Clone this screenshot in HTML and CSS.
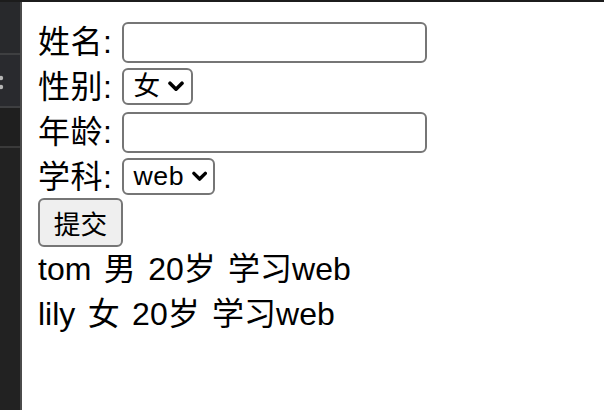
FILE: index.html
```
<!DOCTYPE html>
<html lang="zh">
<head>
<meta charset="utf-8">
<link rel="stylesheet" href="styles.css">
</head>
<body>
<div class="frame">
  <aside class="side">
    <div class="side-cell side-a"></div>
    <div class="side-cell side-b"><svg class="side-glyph" viewBox="0 0 6 18"><circle cx="1" cy="4" r="2.2" fill="#b5b5b5"/><circle cx="1" cy="13" r="2.2" fill="#b5b5b5"/></svg></div>
    <div class="side-cell side-c"></div>
    <div class="side-cell side-d"></div>
  </aside>
  <main class="page">
    <div class="row row-input"><span class="label">姓名:</span><span class="text-input"></span></div>
    <div class="row row-select"><span class="label">性别:</span><span class="select select-sex"><span class="select-val">女</span><svg class="chev" viewBox="0 0 16 11"><path d="M2 2.2 L8 8.2 L14 2.2" fill="none" stroke="#000" stroke-width="3.6" stroke-linecap="round" stroke-linejoin="round"/></svg></span></div>
    <div class="row row-input"><span class="label">年龄:</span><span class="text-input"></span></div>
    <div class="row row-select"><span class="label">学科:</span><span class="select select-sub"><span class="select-val latin">web</span><svg class="chev" viewBox="0 0 16 11"><path d="M2 2.2 L8 8.2 L14 2.2" fill="none" stroke="#000" stroke-width="3.6" stroke-linecap="round" stroke-linejoin="round"/></svg></span></div>
    <div class="btn-row"><span class="btn">提交</span></div>
    <div class="line">tom 男 20岁 学习web</div>
    <div class="line">lily 女 20岁 学习web</div>
  </main>
</div>
</body>
</html>
```
FILE: styles.css
```
* { box-sizing: border-box; }
html, body { margin: 0; padding: 0; }
body {
  width: 604px;
  height: 410px;
  overflow: hidden;
  background: #fff;
  font-family: "Liberation Sans", "Noto Sans CJK SC", sans-serif;
  color: #000;
}
.frame {
  display: flex;
  height: 410px;
  border-top: 2px solid #1c1c1c;
}
.side {
  width: 22px;
  flex: none;
  background: #27282b;
  border-right: 2px solid #4b4b4b;
  display: flex;
  flex-direction: column;
}
.side-cell { border-bottom: 2px solid #3e3f41; }
.side-a { height: 53px; background: #28292c; }
.side-b { height: 53px; background: #292a2e; position: relative; }
.side-c { height: 40px; background: #1f1f1f; border-bottom-color: #3a3a3a; }
.side-d { flex: 1; background: #222222; border-bottom: none; }
.side-glyph {
  position: absolute;
  left: 0;
  top: 19px;
  width: 6px;
  height: 18px;
}
.page {
  flex: 1;
  padding: 16px 16px 0 16px;
}
.row {
  height: 45px;
  display: flex;
  align-items: center;
  font-size: 32px;
}
.label { line-height: 45px; margin-right: 10px; padding-top: 3px; letter-spacing: 0.5px; }
.text-input {
  display: block;
  width: 305px;
  height: 41px;
  border: 2px solid #767676;
  border-radius: 6px;
  background: #fff;
  margin-top: 4px;
}
.select {
  display: flex;
  align-items: center;
  height: 37px;
  border: 2px solid #767676;
  border-radius: 6px;
  background: #fff;
  font-size: 26.7px;
  padding: 0 6px 0 9px;
  margin-top: 2px;
}
.select-val { line-height: 33px; margin-right: 8px; }
.chev { width: 16px; height: 11px; display: block; }
.select-sex { width: 71px; }
.select-sub { width: 93px; }
.select-sub .select-val { letter-spacing: 0.6px; }
.btn-row { height: 49px; display: flex; }
.btn {
  display: flex;
  align-items: center;
  justify-content: center;
  width: 85px;
  height: 49px;
  border: 2px solid #767676;
  border-radius: 6px;
  background: #efefef;
  font-size: 26.7px;
}
.line {
  font-size: 32px;
  line-height: 45px;
  word-spacing: 3.5px;
}
```
